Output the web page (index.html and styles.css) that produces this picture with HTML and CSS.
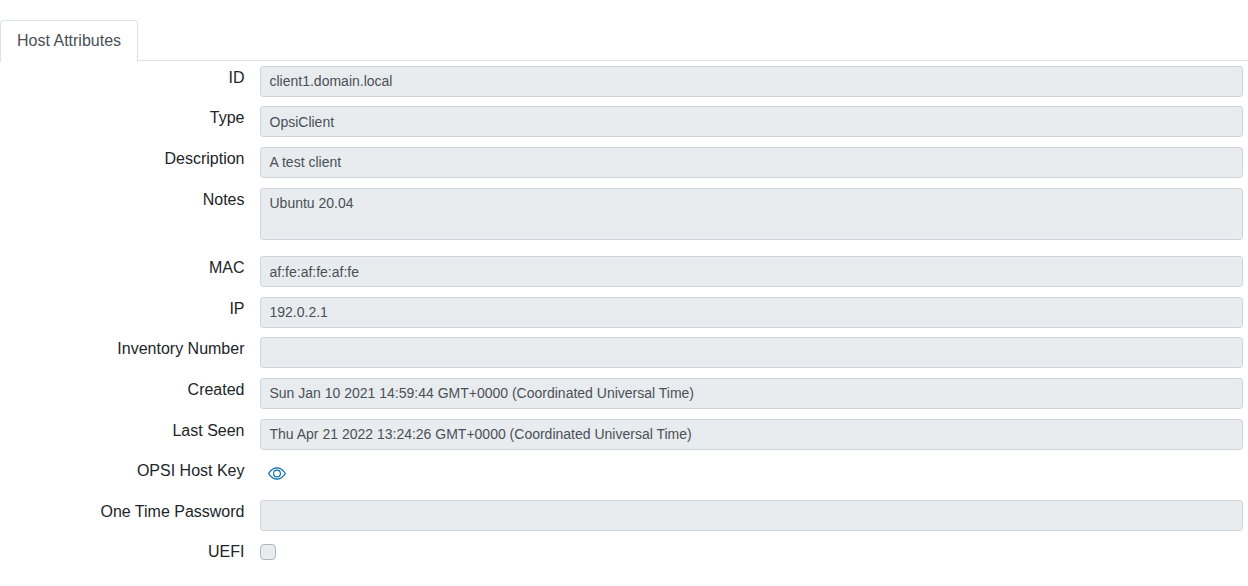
FILE: index.html
```html
<!DOCTYPE html>
<html lang="en">
<head>
<meta charset="utf-8">
<title>Host Attributes</title>
<link rel="stylesheet" href="styles.css">
</head>
<body>
<nav class="tabs"><a class="tab">Host Attributes</a></nav>
<form class="attributes">
<div class="row"><label class="label">ID</label><div class="field">client1.domain.local</div></div>
<div class="row"><label class="label">Type</label><div class="field">OpsiClient</div></div>
<div class="row"><label class="label">Description</label><div class="field">A test client</div></div>
<div class="row row-notes"><label class="label">Notes</label><div class="field field-area">Ubuntu 20.04</div></div>
<div class="row"><label class="label">MAC</label><div class="field">af:fe:af:fe:af:fe</div></div>
<div class="row"><label class="label">IP</label><div class="field">192.0.2.1</div></div>
<div class="row"><label class="label">Inventory Number</label><div class="field"></div></div>
<div class="row"><label class="label">Created</label><div class="field">Sun Jan 10 2021 14:59:44 GMT+0000 (Coordinated Universal Time)</div></div>
<div class="row"><label class="label">Last Seen</label><div class="field">Thu Apr 21 2022 13:24:26 GMT+0000 (Coordinated Universal Time)</div></div>
<div class="row"><label class="label">OPSI Host Key</label><div class="reveal"><svg class="eye" viewBox="0 -0.45 16 16" fill="currentColor"><path d="M16 8s-3-5.500-8-5.500S0 8 0 8s3 5.500 8 5.500S16 8 16 8zM1.173 8a13.133 13.133 0 0 1 1.660-2.043C4.120 4.668 5.880 3.500 8 3.500c2.120 0 3.879 1.168 5.168 2.457A13.133 13.133 0 0 1 14.828 8c-.058.087-.122.183-.195.288-.335.480-.830 1.120-1.465 1.755C11.879 11.332 10.119 12.500 8 12.500c-2.120 0-3.879-1.168-5.168-2.457A13.134 13.134 0 0 1 1.172 8z"/><path d="M8 5.500a2.500 2.500 0 1 0 0 5 2.500 2.500 0 0 0 0-5zM4.500 8a3.500 3.500 0 1 1 7 0 3.500 3.500 0 0 1-7 0z"/></svg></div></div>
<div class="row"><label class="label">One Time Password</label><div class="field"></div></div>
<div class="row"><label class="label">UEFI</label><span class="checkbox"></span></div>
</form>
</body>
</html>
```
FILE: styles.css
```css
* { box-sizing: border-box; }
body { margin: 0; background: #fff; color: #212529; font: 16px/24px "Liberation Sans", Arial, sans-serif; overflow: hidden; }
.tabs { display: flex; height: 61px; padding-top: 20px; border-bottom: 1px solid #dee2e6; }
.tab { height: 42px; padding: 8px 16px; border: 1px solid #dee2e6; border-bottom: 0; border-radius: 4px 4px 0 0; color: #495057; background: #fff; }
.attributes { padding: 4.700px 5px 0 0; }
.row { display: grid; grid-template-columns: 244.500px 1fr; column-gap: 15.500px; align-items: start; height: 40.630px; }
.row-notes { height: 68.460px; }
.label { text-align: right; }
.field { height: 31px; padding: 4.500px 8.500px 0; border: 1px solid #ced4da; border-radius: 3.200px; background: #e9ecef; color: #495057; font-size: 14px; line-height: 21px; }
.field-area { height: 52px; }
.reveal { padding: 5px 8px 0; color: #0069aa; line-height: 0; }
.eye { width: 18px; height: 18px; }
.checkbox { width: 16px; height: 16px; margin-top: 4px; border: 1px solid #adb5bd; border-radius: 4px; background: #e9ecef; }
```
